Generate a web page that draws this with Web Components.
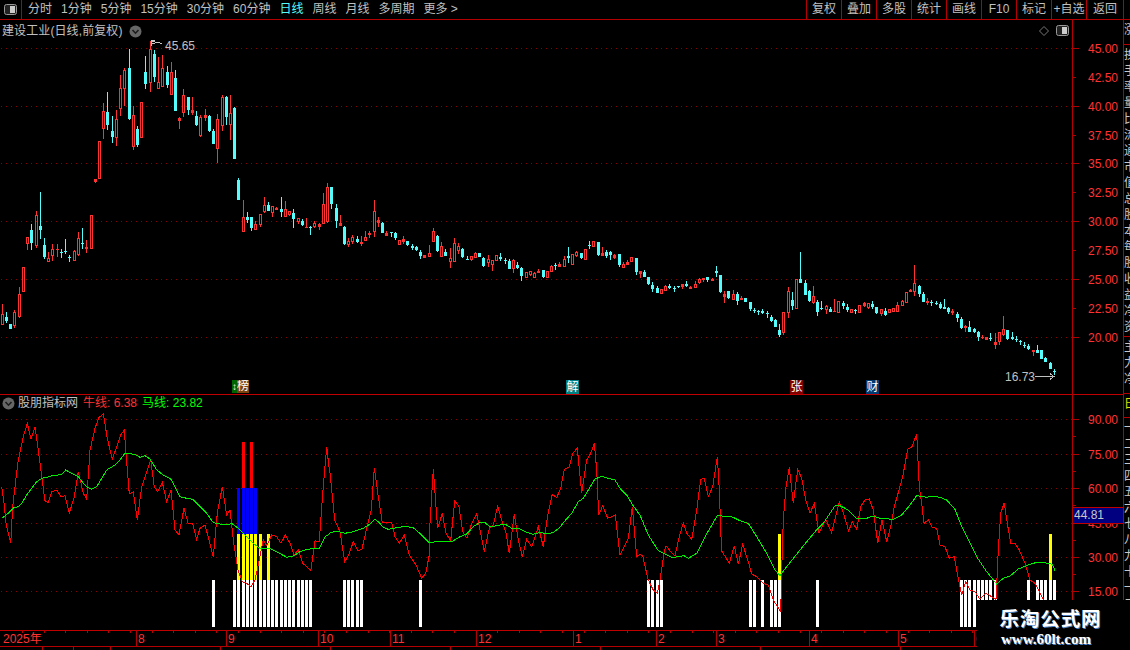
<!DOCTYPE html>
<html lang="zh">
<head>
<meta charset="utf-8">
<title>建设工业</title>
<style>
  html, body { margin: 0; background: #000; overflow: hidden; }
  body { font-family: "Liberation Sans", "Noto Sans CJK SC", sans-serif; font-size: 12px; color: #c0c0c0; }
</style>
</head>
<body>
<stock-app>
  <tool-bar slot="top">
    <tool-tab>分时</tool-tab><tool-tab>1分钟</tool-tab><tool-tab>5分钟</tool-tab><tool-tab>15分钟</tool-tab>
    <tool-tab>30分钟</tool-tab><tool-tab>60分钟</tool-tab><tool-tab active>日线</tool-tab><tool-tab>周线</tool-tab>
    <tool-tab>月线</tool-tab><tool-tab>多周期</tool-tab><tool-tab>更多 &gt;</tool-tab>
    <tool-btn slot="right">复权</tool-btn><tool-btn slot="right">叠加</tool-btn><tool-btn slot="right">多股</tool-btn>
    <tool-btn slot="right">统计</tool-btn><tool-btn slot="right">画线</tool-btn><tool-btn slot="right">F10</tool-btn>
    <tool-btn slot="right">标记</tool-btn><tool-btn slot="right">+自选</tool-btn><tool-btn slot="right" last>返回</tool-btn>
  </tool-bar>
  <kline-pane slot="left"></kline-pane>
  <indicator-pane slot="left"></indicator-pane>
  <date-axis slot="left"></date-axis>
  <price-axis slot="axis"></price-axis>
  <side-strip slot="side"></side-strip>
  <water-mark slot="over"></water-mark>
</stock-app>

<script>
const UI_FONT = '"Liberation Sans", "Noto Sans CJK SC", sans-serif';
const RED = '#ff3232', CYAN = '#54fcfc', LINE = '#b40000', DOT = '#8c0000';

// candle pitch, x of the i-th bar in page pixels
const barX = i => Math.floor(2.3 + 4.225 * i);

// type high top bottom low, read off the screen, page y
const KLINE = `r 304 314 325 325;c 312 317 321 323;c 324 324 329 329;r 310 312 326 328;r 287 294 317 318;r 267 267 292 292;r 237 237 244 250;c 224 230 243 250;r 211 215 246 248;c 192 226 230 239;
c 238 245 257 259;r 252 258 262 262;r 244 249 256 261;r 244 249 250 257;c 249 252 253 258;c 239 251 252 254;c 255 257 258 262;r 250 251 261 261;r 232 238 255 256;c 228 243 244 249;
r 240 247 249 253;r 215 215 249 249;r 179 179 182 183;r 141 141 179 179;r 103 111 129 139;c 92 112 125 130;c 116 131 137 143;r 110 119 138 146;r 75 88 109 116;r 68 70 89 106;
c 49 68 119 120;r 106 115 147 150;c 126 129 145 147;r 102 102 138 138;c 56 72 84 89;r 41 49 83 92;c 50 54 77 82;r 57 82 89 89;r 55 68 87 87;c 66 72 85 88;
r 62 72 95 95;c 70 78 111 111;r 117 118 121 129;r 89 95 113 117;c 97 97 110 115;r 97 110 113 115;c 111 116 125 126;r 115 117 136 137;r 109 115 118 121;c 115 116 131 132;
c 129 131 144 144;r 114 119 149 163;r 95 97 126 131;c 96 97 117 125;r 95 113 125 140;c 107 108 159 159;c 178 180 200 200;r 200 217 232 232;c 212 217 220 223;c 217 217 228 231;
r 221 224 230 230;r 214 214 225 227;r 197 205 212 213;c 202 205 211 211;r 206 206 213 217;r 207 208 210 210;c 197 209 212 217;r 201 209 217 217;r 211 211 215 216;c 209 213 219 228;
r 218 218 222 224;c 219 221 225 226;r 218 227 228 228;c 226 227 228 235;r 221 223 227 228;r 223 224 227 230;r 193 204 224 224;r 183 187 222 223;c 187 187 204 209;c 204 208 221 228;
r 215 223 226 226;c 226 227 244 245;r 238 241 245 247;r 235 237 242 244;c 236 239 242 243;r 236 242 244 246;r 231 237 241 241;r 231 233 235 238;r 200 211 232 237;r 217 220 223 227;
c 222 223 233 233;r 231 233 236 236;c 232 232 233 237;c 232 233 238 240;r 240 240 245 245;r 236 239 242 244;c 241 241 245 246;c 244 246 248 250;c 246 247 250 251;c 250 252 256 259;
r 255 255 258 258;r 245 253 257 257;r 228 231 242 242;c 235 236 251 252;r 242 246 257 257;c 249 252 256 256;r 248 258 262 268;r 238 243 262 262;r 243 246 251 254;c 248 249 257 258;
c 256 259 260 260;r 256 256 260 261;r 252 253 258 258;c 253 253 257 257;c 257 258 266 267;r 255 259 263 267;r 260 260 265 271;r 255 255 261 261;c 253 257 259 261;c 258 260 261 264;
c 259 261 269 269;r 259 260 269 273;c 262 265 268 269;c 267 268 276 281;r 272 272 278 278;r 271 271 275 276;r 272 273 278 278;r 269 271 273 273;c 270 270 277 278;r 271 271 278 278;
r 265 266 272 272;c 263 265 266 270;r 262 264 267 267;r 256 259 267 267;c 247 256 258 263;r 254 254 265 265;r 251 252 256 257;c 253 253 258 259;r 249 249 260 260;c 241 245 246 249;
r 241 241 247 247;c 242 242 255 256;r 247 253 256 256;c 250 252 256 258;c 251 252 255 260;r 254 255 258 259;c 254 254 265 267;r 262 264 268 268;r 260 262 265 265;r 257 257 262 262;
c 258 258 272 275;r 271 271 274 278;c 270 272 277 277;c 277 277 284 285;c 282 285 289 292;c 286 288 293 293;r 289 289 294 294;r 285 286 291 291;c 284 286 288 289;c 286 288 289 292;
c 286 286 287 288;r 284 284 287 289;c 281 284 286 287;r 286 287 289 289;r 281 284 288 288;r 278 279 283 284;r 278 278 280 282;c 277 277 280 282;r 278 279 281 281;c 266 271 273 277;
c 275 275 292 293;r 291 294 297 303;c 291 291 298 299;r 290 294 300 300;c 292 294 301 305;r 296 298 300 300;c 298 298 302 302;c 302 302 309 311;c 308 310 311 313;c 310 311 312 315;
c 309 311 313 314;c 311 313 314 318;c 315 317 321 322;c 319 320 327 327;c 324 330 335 337;r 312 312 333 335;r 287 291 313 318;c 292 300 306 310;r 279 279 309 309;c 252 279 283 283;
c 280 283 295 295;c 290 291 301 302;r 286 296 303 304;c 300 302 312 316;c 301 308 309 310;r 305 306 310 314;c 307 309 312 312;r 299 311 312 312;r 301 301 313 313;c 301 303 306 309;
c 304 307 310 312;r 309 309 313 313;c 309 310 311 314;r 305 305 313 313;r 302 303 306 307;r 303 303 308 309;c 301 304 307 309;c 307 307 313 314;r 309 309 314 316;c 308 311 315 316;
r 309 309 313 313;r 308 308 312 312;r 302 305 312 312;r 300 301 306 306;r 292 292 303 303;r 289 290 292 292;r 265 283 292 296;c 285 286 294 297;c 292 294 302 302;r 298 301 303 305;
c 300 302 303 306;c 301 303 304 305;c 302 304 308 309;c 299 307 309 309;c 307 308 312 314;r 309 311 313 315;c 312 314 318 322;c 317 319 328 329;r 325 326 328 332;c 321 327 332 332;
c 328 329 332 333;c 331 332 337 341;r 335 337 338 339;r 337 337 340 340;c 333 338 339 341;r 333 342 345 349;r 332 332 342 345;r 316 329 335 336;c 330 330 339 340;c 332 337 339 340;
c 336 339 340 342;c 340 341 342 345;c 342 345 346 348;c 344 346 349 350;r 350 350 352 356;c 345 350 353 353;c 350 350 359 359;c 357 358 362 362;c 362 363 369 369;c 369 371 372 375`;

// indicator lines, vertices taken per zoomed crop: [offsetX, offsetY, scale-free pairs]
const crop = (ox, oy, pts) => pts.map((v, k) => k % 2 ? oy + v / 3 : ox + v / 3);
const RED_PTS = [
  ...crop(0, 380, [5,322,12,370,18,430,25,460,32,490,38,380,45,320,55,240,70,170,82,130,93,178,105,142,115,210,125,290,135,362,145,368,155,335,170,330,183,350,195,347,208,398,222,355,235,275,250,340,260,358,270,210,285,145,297,112,310,102,322,175,337,238,350,200,362,165,373,150,378,220,388,342,400,335,412,420,425,320,440,275,452,240,463,320,473,335,487,307,500,365,513,330,525,450,537,464,552,385,565,432,578,430,590,478,600,445,615,435,627,480,640,530,652,400,667,320,680,405,690,390,700,480,714,570,727,605,740,610,753,620,765,600,778,540,790,480,800,497,815,465,830,470,843,490,856,465,870,490,882,525,895,510,908,550,920,560,932,572,945,482,958,485,968,340,980,200,988,270]),
  ...crop(330, 400, [0,220,14,360,30,395,44,485,57,463,70,425,84,452,96,447,110,385,124,330,133,203,145,290,157,368,185,367,195,410,208,430,223,405,237,463,258,495,275,535,287,520,298,465,300,370,310,208,318,320,323,385,337,340,348,400,362,422,374,302,387,320,398,395,411,415,425,370,440,342,450,390,463,455,478,385,490,375,503,318,515,360,528,400,538,460,553,342,565,420,577,470,590,418,605,440,625,380,640,440,653,345,667,283,680,293,692,265,703,208,718,200,728,160,742,145,755,278,770,180,782,160,793,130,800,210,806,345,818,317,833,355,856,345,870,465,895,415,907,320,920,470,930,463]),
  ...crop(640, 420, [0,403,8,408,24,478,40,510,52,520,60,480,72,400,78,377,92,395,105,407,118,350,130,308,140,340,155,358,170,270,182,178,193,176,205,230,218,200,232,110,238,210,243,350,245,393,268,430,283,377,295,433,308,373,325,425,335,462,350,470,370,490,385,495,400,540,422,575,425,450,430,300,438,200,448,142,460,250,473,148,485,175,497,240,510,280,523,250,537,340,557,298,575,338,598,245,612,285,626,333,637,305,650,328,662,260,675,240,688,237,700,270,713,370,726,300,740,365,752,320,763,260,788,170,803,88,815,82,830,42,838,200,845,250]),
  ...crop(900, 500, [72,70,85,60,97,82,110,85,120,135,135,140,148,175,163,170,172,220,185,285,197,245,210,270,225,275,240,298,258,280,275,290,288,298,295,150,302,40,313,8,322,70,332,130,345,130,358,150,375,190,390,240,405,250,430,298,465,340])
];
const GREEN_PTS = [
  ...crop(0, 380, [5,415,18,405,30,395,42,383,55,380,65,370,80,345,95,325,110,305,125,295,140,292,155,287,170,286,185,283,197,270,215,280,235,290,250,310,262,322,275,328,290,320,305,295,320,270,345,255,360,240,375,220,390,220,410,226,420,232,435,227,450,237,470,270,490,285,512,297,525,320,540,350,560,355,578,358,600,380,620,400,640,428,660,432,680,435,695,430,715,445,735,465,760,490,780,505,810,505,830,515,860,532,880,528,900,515,920,508,958,505,975,470,988,462]),
  ...crop(330, 400, [0,398,20,393,45,400,70,395,100,385,120,372,135,358,145,365,160,382,175,388,200,383,225,379,250,383,275,405,298,428,320,425,345,425,365,425,390,410,410,402,430,380,450,367,465,368,480,380,500,377,525,372,545,385,565,385,590,397,610,403,630,397,650,402,670,397,690,382,705,362,725,340,745,305,760,295,775,270,795,237,815,229,835,235,855,240,870,265,890,285,910,318,930,345]),
  ...crop(640, 420, [0,285,25,345,55,392,75,402,95,412,120,410,130,406,145,415,170,400,195,350,232,287,275,290,300,302,325,310,350,350,380,400,405,450,420,467,440,440,480,390,525,335,550,310,585,257,600,257,625,270,650,297,680,295,700,288,720,295,760,298,785,285,810,255,830,227,860,232,878,229,900,232]),
  ...crop(900, 500, [140,0,165,28,185,80,210,130,230,170,260,215,290,252,310,235,330,228,355,207,385,195,410,187,450,190,458,195,465,212])
];
const toPolyline = arr => {
  let s = '';
  for (let i = 0; i < arr.length; i += 2) s += arr[i].toFixed(1) + ',' + arr[i + 1].toFixed(1) + ' ';
  return s;
};
const dotted = (y, x2) => `<line x1="1" x2="${x2}" y1="${y + .5}" y2="${y + .5}" stroke="${DOT}" stroke-dasharray="1 4"/>`;
const CHEVRON = `<svg width="13" height="13" viewBox="0 0 13 13"><circle cx="6.5" cy="6.5" r="6" fill="#666"/><path d="M3.5 5 L6.5 8.2 L9.5 5" fill="none" stroke="#1c1c1c" stroke-width="1.6"/></svg>`;
const PANEL_ICON = `<svg width="13" height="11" viewBox="0 0 13 11"><rect x=".5" y=".5" width="12" height="10" rx="2" fill="#222" stroke="#999"/><rect x="6" y="2" width="5" height="7" fill="#ccc"/></svg>`;

class StockApp extends HTMLElement {
  constructor() {
    super();
    this.attachShadow({ mode: 'open' }).innerHTML = `
      <style>
        :host { display: grid; grid-template-rows: 20px 630px; grid-template-columns: 1130px; width: 1130px; height: 650px; position: relative; background: #000; overflow: hidden; }
        .body { display: flex; width: 1130px; height: 630px; }
        .left { display: flex; flex-direction: column; width: 1072px; flex: none; }
      </style>
      <slot name="top"></slot>
      <div class="body">
        <div class="left"><slot name="left"></slot></div>
        <slot name="axis"></slot>
        <slot name="side"></slot>
      </div>
      <slot name="over"></slot>`;
  }
}

class ToolBar extends HTMLElement {
  constructor() {
    super();
    this.attachShadow({ mode: 'open' }).innerHTML = `
      <style>
        :host { display: flex; height: 20px; box-sizing: border-box; border-bottom: 1px solid ${LINE}; align-items: stretch; }
        .toggle { width: 22px; box-sizing: border-box; border-right: 1px solid ${LINE}; display: flex; align-items: center; justify-content: center; flex: none; }
        .tabs { display: flex; gap: 9px; padding-left: 6px; align-items: center; flex: 1; }
        .right { display: flex; margin-right: 6px; }
      </style>
      <div class="toggle">${PANEL_ICON}</div>
      <div class="tabs"><slot></slot></div>
      <div class="right"><slot name="right"></slot></div>`;
  }
}

class ToolTab extends HTMLElement {
  constructor() {
    super();
    this.attachShadow({ mode: 'open' }).innerHTML = `
      <style>
        :host { display: block; color: #c0c0c0; font: 12px ${UI_FONT}; line-height: 19px; white-space: nowrap; }
        :host([active]) { color: #54fcfc; }
      </style><slot></slot>`;
  }
}

class ToolBtn extends HTMLElement {
  constructor() {
    super();
    this.attachShadow({ mode: 'open' }).innerHTML = `
      <style>
        :host { display: block; width: 35px; box-sizing: border-box; border-left: 1px solid ${LINE}; color: #c0c0c0; font: 12px ${UI_FONT}; line-height: 19px; text-align: center; white-space: nowrap; }
        :host([last]) { width: 38px; border-right: 1px solid ${LINE}; }
      </style><slot></slot>`;
  }
}

class StockBadge extends HTMLElement {
  constructor() {
    super();
    this.attachShadow({ mode: 'open' }).innerHTML = `
      <style>
        :host { position: absolute; top: 360px; width: 13px; height: 14px; color: #fff; font: 12px/14px ${UI_FONT}; text-align: center; overflow: hidden; }
      </style><slot></slot>`;
  }
}

class KlinePane extends HTMLElement {
  constructor() {
    super();
    let body = '';
    [48, 106, 163, 221, 279, 337].forEach(y => { body += dotted(y, 1072); });
    KLINE.split(';').forEach((row, i) => {
      const [type, h, t, b, l] = row.trim().split(' ');
      const [hi, top, bot, lo] = [h, t, b, l].map(Number);
      const x = barX(i);
      const c = type === 'r' ? RED : CYAN;
      if (hi < top) body += `<rect x="${x}" y="${hi}" width="1" height="${top - hi}" fill="${c}"/>`;
      if (lo > bot) body += `<rect x="${x}" y="${bot}" width="1" height="${lo - bot}" fill="${c}"/>`;
      if (type === 'c' || bot - top <= 3) {
        body += `<rect x="${x - 1}" y="${top}" width="3" height="${Math.max(1, bot - top)}" fill="${c}"/>`;
      } else {
        body += `<rect x="${x - .5}" y="${top + .5}" width="2" height="${bot - top - 1}" fill="none" stroke="${c}"/>`;
      }
    });
    this.attachShadow({ mode: 'open' }).innerHTML = `
      <style>
        :host { display: block; position: relative; height: 375px; box-sizing: border-box; border-bottom: 1px solid #c00000; }
        svg.plot { position: absolute; left: 0; top: 0; display: block; }
        svg text { font: 12px ${UI_FONT}; fill: #c0c0c0; }
        .title { position: absolute; left: 2px; top: 3px; display: flex; align-items: center; gap: 6px; color: #c0c0c0; font: 12px/16px ${UI_FONT}; letter-spacing: .1px; white-space: nowrap; }
        .title svg { display: block; }
        .tools { position: absolute; right: 3px; top: 5px; display: flex; align-items: center; gap: 7px; }
        .tools svg { display: block; }
        .two { display: flex; left: 232px; top: 360px; position: absolute; width: 17px; height: 13px; }
        .two b { display: block; width: 5px; background: #006400; color: #fff; font: 10px/13px ${UI_FONT}; overflow: hidden; text-align: center; }
        .two i { display: block; width: 12px; background: #7a4310; color: #fff; font: normal 12px/13px ${UI_FONT}; text-align: center; overflow: hidden; }
      </style>
      <svg class="plot" width="1072" height="375" viewBox="0 20 1072 375" shape-rendering="crispEdges">
        ${body}
        <polyline points="151,46 151,40 155,41 151,41.5 151,43 155,43 158,42 162,44" fill="none" stroke="#c8c8c8"/>
        <text x="165" y="50">45.65</text>
        <text x="1005" y="381">16.73</text>
        <path d="M1035 376.5 H1054 M1050 373.5 L1054 376.5 L1050 379.5" fill="none" stroke="#c0c0c0"/>
      </svg>
      <div class="title"><span>建设工业(日线,前复权)</span>${CHEVRON}</div>
      <div class="tools">
        <svg width="10" height="10" viewBox="0 0 10 10"><path d="M5 .5 L9.5 5 L5 9.5 L.5 5 Z" fill="none" stroke="#777"/></svg>
        ${PANEL_ICON}
      </div>
      <div class="two"><b>↕</b><i>榜</i></div>
      <stock-badge style="left:566px;background:#008080">解</stock-badge>
      <stock-badge style="left:790px;background:#800000">张</stock-badge>
      <stock-badge style="left:866px;background:#003a70">财</stock-badge>`;
  }
}

class IndicatorPane extends HTMLElement {
  constructor() {
    super();
    const bar = (i, y, h, c) => `<rect x="${barX(i) - 1}" y="${y}" width="3" height="${h}" fill="${c}"/>`;
    let body = '';
    [419, 454, 488, 523, 557, 591].forEach(y => { body += dotted(y, 1072); });
    const white = [50];
    for (let i = 55; i <= 73; i++) white.push(i);
    white.push(81, 82, 83, 84, 85, 99, 153, 154, 155, 156, 177, 178, 180, 182, 183, 184, 193);
    for (let i = 227; i <= 235; i++) white.push(i);
    white.push(243, 245, 246, 247, 248, 249);
    white.forEach(i => { body += bar(i, 580, 47, '#fff'); });
    [56, 57, 58, 59, 60, 61, 63, 184, 248].forEach(i => { body += bar(i, 534, 46, '#ffff00'); });
    [56, 57, 58, 59, 60].forEach(i => { body += bar(i, 488, 46, '#0000ff'); });
    [57, 59].forEach(i => { body += bar(i, 442, 46, '#ff0000'); });
    this.attachShadow({ mode: 'open' }).innerHTML = `
      <style>
        :host { display: block; position: relative; height: 235px; }
        svg.plot { position: absolute; left: 0; top: 0; display: block; }
        .title { position: absolute; left: 2px; top: 0; display: flex; align-items: center; font: 12px/17px ${UI_FONT}; white-space: nowrap; height: 17px; }
        .title svg { display: block; margin-right: 3px; }
        .name { color: #c0c0c0; margin-right: 5px; }
        .ox { color: #ff3232; margin-right: 5px; }
        .ma { color: #00ff00; }
      </style>
      <svg class="plot" width="1072" height="235" viewBox="0 395 1072 235" shape-rendering="crispEdges">
        ${body}
        <polyline points="${toPolyline(RED_PTS)}" fill="none" stroke="#ff0000"/>
        <polyline points="${toPolyline(GREEN_PTS)}" fill="none" stroke="#00ee00"/>
      </svg>
      <div class="title">${CHEVRON}<span class="name">股朋指标网</span><span class="ox">牛线: 6.38</span><span class="ma">马线: 23.82</span></div>`;
  }
}

class DateAxis extends HTMLElement {
  constructor() {
    super();
    const months = [[136, '8'], [226, '9'], [318, '10'], [390, '11'], [476, '12'], [573, '1'], [656, '2'], [716, '3'], [809, '4'], [898, '5'], [974, '6']];
    let ticks = '', labels = '';
    for (let x = 22; x < 1072; x += 21.6) ticks += `<line x1="${Math.round(x) + .5}" x2="${Math.round(x) + .5}" y1="0" y2="3" stroke="${LINE}"/>`;
    months.forEach(([x, t]) => {
      ticks += `<line x1="${x + .5}" x2="${x + .5}" y1="0" y2="16" stroke="${LINE}"/>`;
      labels += `<text x="${x + 2}" y="13">${t}</text>`;
    });
    [42, 73, 110, 220, 330, 450, 600, 760, 900].forEach(x => { ticks += `<line x1="${x + .5}" x2="${x + .5}" y1="16" y2="20" stroke="${LINE}"/>`; });
    this.attachShadow({ mode: 'open' }).innerHTML = `
      <style>
        :host { display: block; height: 20px; box-sizing: border-box; }
        svg { display: block; }
        text { font: 12px ${UI_FONT}; fill: #ff3232; }
      </style>
      <svg width="1072" height="20" viewBox="0 0 1072 20" shape-rendering="crispEdges">
        <line x1="0" x2="1072" y1=".5" y2=".5" stroke="#c00000"/>
        <line x1="0" x2="1072" y1="16.5" y2="16.5" stroke="${LINE}"/>
        ${ticks}
        <text x="3" y="13">2025年</text>${labels}
      </svg>`;
  }
}

class PriceAxis extends HTMLElement {
  constructor() {
    super();
    const priceRows = [['45.00', 48], ['42.50', 77], ['40.00', 106], ['37.50', 135], ['35.00', 163], ['32.50', 192], ['30.00', 221], ['27.50', 250], ['25.00', 279], ['22.50', 308], ['20.00', 337]];
    const indexRows = [['90.00', 419], ['75.00', 454], ['60.00', 488], ['45.00', 523], ['30.00', 557], ['15.00', 591]];
    let s = '';
    priceRows.forEach(([t, y], k) => {
      s += `<line x1="0" x2="${k % 2 ? 3 : 6}" y1="${y + .5}" y2="${y + .5}" stroke="${LINE}"/>`;
      s += `<text x="15" y="${y + 5}">${t}</text>`;
    });
    indexRows.forEach(([t, y]) => {
      s += `<line x1="0" x2="6" y1="${y + .5}" y2="${y + .5}" stroke="${LINE}"/>`;
      s += `<line x1="0" x2="3" y1="${y + 17.5}" y2="${y + 17.5}" stroke="${LINE}"/>`;
      s += `<text x="15" y="${y + 5}">${t}</text>`;
    });
    this.attachShadow({ mode: 'open' }).innerHTML = `
      <style>
        :host { display: block; position: relative; width: 52px; flex: none; height: 630px; box-sizing: border-box; border-left: 1px solid ${LINE}; border-right: 1px solid ${LINE}; }
        svg { display: block; position: absolute; left: 0; top: 0; }
        text { font: 12px ${UI_FONT}; fill: #ff3232; }
        .live { position: absolute; left: 0; right: 0; top: 487px; height: 15px; background: #000080; border-top: 1px solid #c00000; border-bottom: 1px solid #c00000; color: #c8c8c8; font: 12px/15px ${UI_FONT}; padding-left: 1px; }
      </style>
      <svg width="50" height="630" viewBox="0 0 50 630" shape-rendering="crispEdges">
        <line x1="0" x2="50" y1="374.5" y2="374.5" stroke="#c00000"/>
        <g transform="translate(0 -20)">${s}</g>
      </svg>
      <div class="live">44.81</div>`;
  }
}

class SideStrip extends HTMLElement {
  constructor() {
    super();
    const col = (chars, h, cls) => `<div class="sec ${cls || ''}" style="height:${h}px">${chars.split('').map(c => `<span>${c}</span>`).join('')}</div>`;
    this.attachShadow({ mode: 'open' }).innerHTML = `
      <style>
        :host { display: block; flex: 1; min-width: 0; height: 630px; overflow: hidden; }
        .sec { overflow: hidden; box-sizing: border-box; border-bottom: 1px solid ${LINE}; padding-top: 2px; }
        .sec span { display: block; font: 12px/16px ${UI_FONT}; color: #c8c8c8; }
        .hot span { color: #e0e000; }
      </style>
      ${col('涨', 25)}
      ${col('换手率量比流通市值总股本每股收益净资', 292)}
      ${col('主力净', 57)}
      ${col('日', 24, 'hot')}
      ${col('一二三四五六七八九十一二', 212)}`;
  }
}

class WaterMark extends HTMLElement {
  constructor() {
    super();
    this.attachShadow({ mode: 'open' }).innerHTML = `
      <style>
        :host { position: absolute; left: 977px; top: 600px; width: 153px; height: 50px; background: #000; color: #fff; text-align: center; box-sizing: border-box; padding: 7px 6px 0 0; }
        .cn { font: bold 19.5px/22px "Noto Sans CJK SC", sans-serif; letter-spacing: .9px; text-shadow: 1px 1px 0 #4a7fc0; white-space: nowrap; }
        .en { font: bold 15px/17px "Liberation Serif", serif; text-shadow: 1px 1px 0 #4a7fc0; margin: 2px 9px 0 0; white-space: nowrap; }
      </style>
      <div class="cn">乐淘公式网</div>
      <div class="en">www.60lt.com</div>`;
  }
}

customElements.define('stock-badge', StockBadge);
customElements.define('tool-tab', ToolTab);
customElements.define('tool-btn', ToolBtn);
customElements.define('tool-bar', ToolBar);
customElements.define('kline-pane', KlinePane);
customElements.define('indicator-pane', IndicatorPane);
customElements.define('date-axis', DateAxis);
customElements.define('price-axis', PriceAxis);
customElements.define('side-strip', SideStrip);
customElements.define('water-mark', WaterMark);
customElements.define('stock-app', StockApp);
</script>
</body>
</html>
